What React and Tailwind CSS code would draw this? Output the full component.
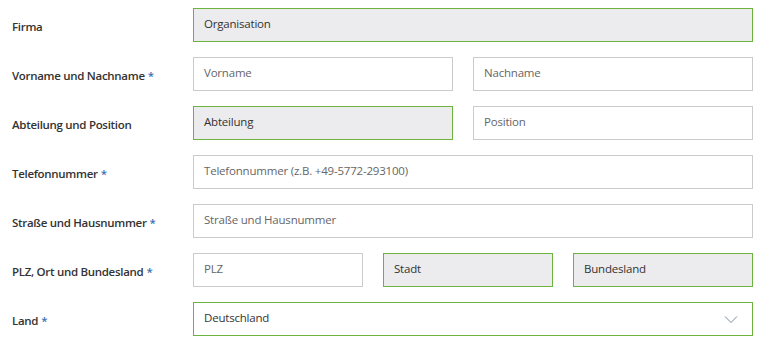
import React from 'react';

const GREEN = 'border-[#6cb33f]';

const Field = ({ text, filled = false, green = false, dark = false, className = '' }) => (
  <div
    className={`h-[34px] flex items-center pl-[10px] pb-[2px] border ${green ? GREEN : 'border-[#cbcbcb]'} ${
      filled ? 'bg-[#ececee]' : 'bg-white'
    } ${dark ? 'text-[#333]' : 'text-[#666]'} text-[11.5px] tracking-[-0.2px] ${className}`}
  >
    {text}
  </div>
);

const Row = ({ label, required, children }) => (
  <div className="flex items-center h-[34px]">
    <div className="w-[193px] pl-[12px] text-[11.5px] tracking-[-0.3px] font-semibold text-[#333] pt-[4px]">
      {label}
      {required && <span className="text-[#3a6fb5] ml-[3px]">*</span>}
    </div>
    <div className="flex gap-[20px] w-[560px]">{children}</div>
  </div>
);

export default function App() {
  return (
    <div
      className="w-[761px] h-[346px] bg-white pt-[8px] flex flex-col gap-[15px]"
      style={{ fontFamily: '"Open Sans", "Noto Sans", sans-serif' }}
    >
      <Row label="Firma">
        <Field text="Organisation" filled green dark className="w-[560px]" />
      </Row>
      <Row label="Vorname und Nachname" required>
        <Field text="Vorname" className="w-[260px]" />
        <Field text="Nachname" className="w-[280px]" />
      </Row>
      <Row label="Abteilung und Position">
        <Field text="Abteilung" filled green dark className="w-[260px]" />
        <Field text="Position" className="w-[280px]" />
      </Row>
      <Row label="Telefonnummer" required>
        <Field text="Telefonnummer (z.B. +49-5772-293100)" className="w-[560px]" />
      </Row>
      <Row label="Straße und Hausnummer" required>
        <Field text="Straße und Hausnummer" className="w-[560px]" />
      </Row>
      <Row label="PLZ, Ort und Bundesland" required>
        <Field text="PLZ" className="w-[170px]" />
        <Field text="Stadt" filled green dark className="w-[170px]" />
        <Field text="Bundesland" filled green dark className="w-[180px]" />
      </Row>
      <Row label="Land" required>
        <div className={`relative h-[34px] w-[560px] flex items-center pl-[10px] pb-[2px] border ${GREEN} bg-white text-[11.5px] tracking-[-0.2px] text-[#333]`}>
          Deutschland
          <svg
            className="absolute right-[14px] top-[12px]"
            width="14"
            height="9"
            viewBox="0 0 14 9"
            fill="none"
          >
            <path d="M1 1.5 L7 7.5 L13 1.5" stroke="#7a8a99" strokeWidth="1" />
          </svg>
        </div>
      </Row>
    </div>
  );
}
